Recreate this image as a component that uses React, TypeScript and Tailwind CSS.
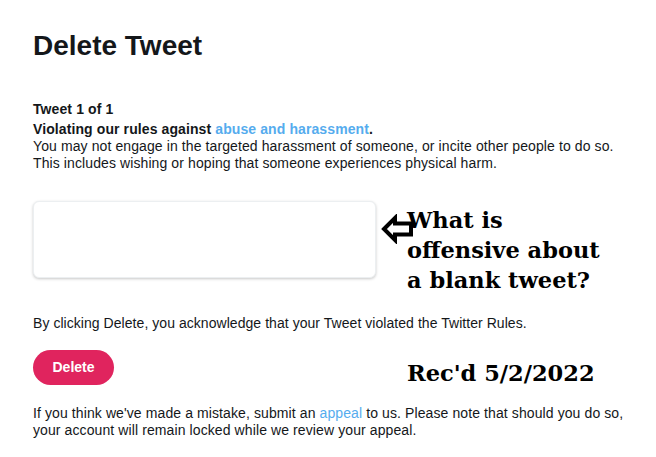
import React from "react";

const sans = { fontFamily: '"Liberation Sans", Arial, sans-serif' };
const serif = { fontFamily: '"DejaVu Serif", Georgia, serif' };

function HollowArrow() {
  return (
    <svg width="34" height="30" viewBox="0 0 34 30" className="absolute left-[381px] top-[214px]">
      <path
        d="M3 15 L14 4 L14 9.5 L30 9.5 L30 20.5 L14 20.5 L14 26 Z"
        fill="white"
        stroke="black"
        strokeWidth="4"
        strokeLinejoin="miter"
      />
    </svg>
  );
}

export default function App() {
  return (
    <div className="relative w-[656px] h-[457px] bg-white text-[#14171a] overflow-hidden" style={sans}>
      <div className="flex flex-col pl-[33px] pt-[29px]">
        <h1 className="text-[28px] leading-[34px] font-bold">Delete Tweet</h1>

        {/* rule violation text */}
        <div className="mt-[38px] text-[14px] leading-[17px] tracking-[0.1px]">
          <div className="font-bold">Tweet 1 of 1</div>
          <div className="mt-[3px] font-bold">
            Violating our rules against <span className="text-[#55acee]">abuse and harassment</span>.
          </div>
          <div>
            You may not engage in the targeted harassment of someone, or incite other people to do so.
            <br />
            This includes wishing or hoping that someone experiences physical harm.
          </div>
        </div>

        {/* blank tweet card */}
        <div className="mt-[29px] w-[343px] h-[77px] rounded-[6px] border border-[#eceff1] bg-white shadow-[0_1px_3px_rgba(0,0,0,0.22)]" />

        <p className="mt-[37px] text-[14px] leading-[17px] tracking-[0.05px]">
          By clicking Delete, you acknowledge that your Tweet violated the Twitter Rules.
        </p>

        <div className="mt-[18px]">
          <button className="w-[81px] h-[35px] rounded-full bg-[#e0245e] text-white text-[14px] font-bold">
            Delete
          </button>
        </div>

        <p className="mt-[20px] text-[14px] leading-[17px] tracking-[0.1px]">
          If you think we've made a mistake, submit an <span className="text-[#55acee]">appeal</span> to us. Please note
          that should you do so,
          <br />
          your account will remain locked while we review your appeal.
        </p>
      </div>

      {/* annotations laid over the screenshot */}
      <HollowArrow />
      <div className="absolute left-[407px] top-[205px] text-[22.5px] leading-[30px] font-bold text-black" style={serif}>
        What is
        <br />
        offensive about
        <br />
        a blank tweet?
      </div>
      <div className="absolute left-[407px] top-[358px] text-[22.5px] leading-[30px] font-bold text-black" style={serif}>
        Rec'd 5/2/2022
      </div>
    </div>
  );
}
